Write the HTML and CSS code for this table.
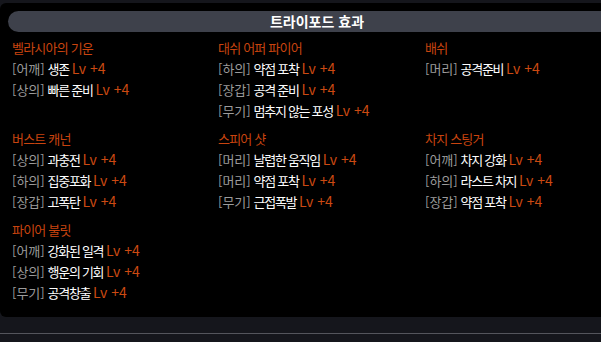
FILE: index.html
```html
<!DOCTYPE html>
<html lang="ko">
<head>
<meta charset="utf-8">
<link rel="stylesheet" href="styles.css">
</head>
<body>
<div class="topband"></div>
<div class="panel">
  <div class="header">트라이포드 효과</div>
  <div class="grid">
    <div class="group">
      <div class="title">벨라시아의 기운</div>
      <div class="row"><span class="slot">[어깨]</span> <span class="name">생존</span> <span class="lv">Lv +4</span></div>
      <div class="row"><span class="slot">[상의]</span> <span class="name">빠른 준비</span> <span class="lv">Lv +4</span></div>
    </div>
    <div class="group">
      <div class="title">대쉬 어퍼 파이어</div>
      <div class="row"><span class="slot">[하의]</span> <span class="name">약점 포착</span> <span class="lv">Lv +4</span></div>
      <div class="row"><span class="slot">[장갑]</span> <span class="name">공격 준비</span> <span class="lv">Lv +4</span></div>
      <div class="row"><span class="slot">[무기]</span> <span class="name">멈추지 않는 포성</span> <span class="lv">Lv +4</span></div>
    </div>
    <div class="group">
      <div class="title">배쉬</div>
      <div class="row"><span class="slot">[머리]</span> <span class="name">공격준비</span> <span class="lv">Lv +4</span></div>
    </div>
    <div class="group">
      <div class="title">버스트 캐넌</div>
      <div class="row"><span class="slot">[상의]</span> <span class="name">과충전</span> <span class="lv">Lv +4</span></div>
      <div class="row"><span class="slot">[하의]</span> <span class="name">집중포화</span> <span class="lv">Lv +4</span></div>
      <div class="row"><span class="slot">[장갑]</span> <span class="name">고폭탄</span> <span class="lv">Lv +4</span></div>
    </div>
    <div class="group">
      <div class="title">스피어 샷</div>
      <div class="row"><span class="slot">[머리]</span> <span class="name">날렵한 움직임</span> <span class="lv">Lv +4</span></div>
      <div class="row"><span class="slot">[머리]</span> <span class="name">약점 포착</span> <span class="lv">Lv +4</span></div>
      <div class="row"><span class="slot">[무기]</span> <span class="name">근접폭발</span> <span class="lv">Lv +4</span></div>
    </div>
    <div class="group">
      <div class="title">차지 스팅거</div>
      <div class="row"><span class="slot">[어깨]</span> <span class="name">차지 강화</span> <span class="lv">Lv +4</span></div>
      <div class="row"><span class="slot">[하의]</span> <span class="name">라스트 차지</span> <span class="lv">Lv +4</span></div>
      <div class="row"><span class="slot">[장갑]</span> <span class="name">약점 포착</span> <span class="lv">Lv +4</span></div>
    </div>
    <div class="group">
      <div class="title">파이어 불릿</div>
      <div class="row"><span class="slot">[어깨]</span> <span class="name">강화된 일격</span> <span class="lv">Lv +4</span></div>
      <div class="row"><span class="slot">[상의]</span> <span class="name">행운의 기회</span> <span class="lv">Lv +4</span></div>
      <div class="row"><span class="slot">[무기]</span> <span class="name">공격창출</span> <span class="lv">Lv +4</span></div>
    </div>
  </div>
</div>
<div class="gapband"></div>
<div class="footer"></div>
</body>
</html>
```

FILE: styles.css
```css
html, body {
  margin: 0;
  padding: 0;
  background: #15161c;
  overflow: hidden;
}
body {
  font-family: "Noto Sans CJK KR", "Noto Sans", sans-serif;
  font-size: 13px;
  color: #ffffff;
}
.topband {
  height: 3px;
}
.panel {
  height: 314px;
  box-sizing: border-box;
  background: #000000;
  border-radius: 6px 0 0 6px;
  padding: 8px 0 0 8px;
}
.header {
  height: 21px;
  line-height: 21px;
  background: #3e414b;
  border-radius: 11px 0 0 11px;
  padding-left: 25px;
  text-align: center;
  font-weight: bold;
  font-size: 14px;
  letter-spacing: 0;
  color: #ffffff;
}
.grid {
  display: grid;
  grid-template-columns: 206px 207px 180px;
  row-gap: 7px;
  margin-top: 5px;
  padding-left: 4px;
}
.group {
  display: flex;
  flex-direction: column;
  height: 84px;
}
.title, .row {
  height: 21px;
  line-height: 21px;
  white-space: nowrap;
  letter-spacing: -0.8px;
}
.title {
  color: #c9440f;
}
.slot {
  color: #9b9b9b;
  letter-spacing: 0;
}
.name {
  color: #ffffff;
  letter-spacing: -1.3px;
}
.lv {
  color: #cc4a12;
  font-size: 14px;
  letter-spacing: 0;
}
.gapband {
  height: 8px;
}
.footer {
  margin-top: 8px;
  height: 10px;
  border-top: 1px solid #54555c;
}
```
